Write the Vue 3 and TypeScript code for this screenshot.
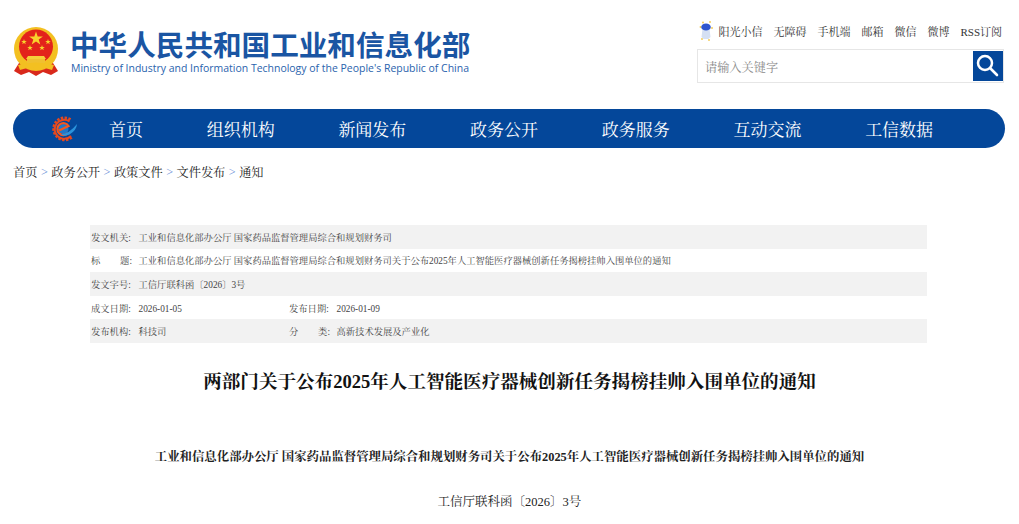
<script setup lang="ts">
const topLinks = ['无障碍', '手机端', '邮箱', '微信', '微博', 'RSS订阅'];
const navItems = ['首页', '组织机构', '新闻发布', '政务公开', '政务服务', '互动交流', '工信数据'];
const crumbs = ['首页', '政务公开', '政策文件', '文件发布', '通知'];

const docTitle = '工业和信息化部办公厅 国家药品监督管理局综合和规划财务司关于公布2025年人工智能医疗器械创新任务揭榜挂帅入围单位的通知';

// a space in a label means its two halves sit at both ends of the label box
const metaRows = [
  [{ label: '发文机关:', value: '工业和信息化部办公厅 国家药品监督管理局综合和规划财务司' }],
  [{ label: '标 题:', value: docTitle }],
  [{ label: '发文字号:', value: '工信厅联科函〔2026〕3号' }],
  [
    { label: '成文日期:', value: '2026-01-05' },
    { label: '发布日期:', value: '2026-01-09' },
  ],
  [
    { label: '发布机构:', value: '科技司' },
    { label: '分 类:', value: '高新技术发展及产业化' },
  ],
];
</script>

<template>
  <div class="page">
    <header class="header">
      <div class="brand">
        <svg class="emblem" viewBox="0 0 46 50" aria-hidden="true">
          <path d="M6 36 L1 44 L8 48 L16 45 L23 49 L30 45 L38 48 L45 44 L40 36 Z" fill="#d9291c" />
          <circle cx="23" cy="22" r="22" fill="#f3c021" />
          <circle cx="23" cy="19.5" r="17" fill="#e3231b" />
          <path d="M23 4.5l1.7 5h5.2l-4.2 3.1 1.6 5-4.3-3.1-4.3 3.1 1.6-5-4.2-3.1h5.2z" fill="#f8d22c" />
          <path d="M11 12l.7 2h2.1l-1.7 1.2.7 2-1.8-1.2-1.8 1.2.7-2-1.7-1.2h2.1z" fill="#f8d22c" />
          <path d="M35 12l.7 2h2.1l-1.7 1.2.7 2-1.8-1.2-1.8 1.2.7-2-1.7-1.2h2.1z" fill="#f8d22c" />
          <path d="M17 18l.7 2h2.1l-1.7 1.2.7 2-1.8-1.2-1.8 1.2.7-2-1.7-1.2h2.1z" fill="#f8d22c" />
          <path d="M29 18l.7 2h2.1l-1.7 1.2.7 2-1.8-1.2-1.8 1.2.7-2-1.7-1.2h2.1z" fill="#f8d22c" />
          <path d="M15 29h16l2 3H13z" fill="#f5cf3a" />
          <rect x="14" y="32" width="18" height="5" fill="#f0c030" />
          <path d="M5 38 Q23 33 41 38 L39 43 Q23 37 7 43 Z" fill="#f3c021" />
          <rect x="21" y="38" width="4" height="4" fill="#f3c021" />
        </svg>
        <div class="brand-text">
          <div class="brand-cn">中华人民共和国工业和信息化部</div>
          <div class="brand-en">Ministry of Industry and Information Technology of the People's Republic of China</div>
        </div>
      </div>

      <div class="tools">
        <div class="top-links">
          <a class="sunshine">
            <svg class="sunshine-icon" viewBox="0 0 14 20" aria-hidden="true">
              <circle cx="1.5" cy="6" r="0.9" fill="#f2c84b" />
              <circle cx="4" cy="1.5" r="0.9" fill="#f2c84b" />
              <circle cx="11" cy="1" r="0.9" fill="#f2c84b" />
              <circle cx="13" cy="7" r="0.9" fill="#f2c84b" />
              <circle cx="3" cy="18" r="0.9" fill="#f2c84b" />
              <circle cx="10" cy="19" r="0.9" fill="#f2c84b" />
              <path d="M3.5 8h7l1 8-2 2h-5l-2-2z" fill="#d5e0f3" />
              <ellipse cx="7" cy="6" rx="4.8" ry="3.6" fill="#2f56cf" />
            </svg>
            阳光小信
          </a>
          <a v-for="link in topLinks" :key="link">{{ link }}</a>
        </div>
        <div class="search">
          <input class="search-input" placeholder="请输入关键字" />
          <button class="search-btn" aria-label="搜索">
            <svg viewBox="0 0 24 24" width="24" height="24" aria-hidden="true">
              <circle cx="9" cy="9" r="7" fill="none" stroke="#fff" stroke-width="2.5" />
              <path d="M14.5 14.5l6.5 6.5" stroke="#fff" stroke-width="2.6" stroke-linecap="round" />
            </svg>
          </button>
        </div>
      </div>
    </header>

    <nav class="nav">
      <svg class="nav-logo" viewBox="0 0 26 26" aria-hidden="true">
        <path d="M19.5 3.5A11 11 0 1 0 21 21" fill="none" stroke="#e2491f" stroke-width="2.8" stroke-dasharray="2.4 1.4" />
        <path d="M18.5 5.5A9.500 9.500 0 1 0 20 20" fill="none" stroke="#e8481d" stroke-width="2" />
        <circle cx="12.500" cy="13" r="5" fill="#1f78c8" />
        <path d="M17 17A6 6 0 1 1 17.500 10L8 14.500" fill="none" stroke="#f4571f" stroke-width="2.200" />
        <path d="M10 18Q18 18 26 8Q25.500 14.500 18.500 18.500Q13 21 10 18Z" fill="#2a93dc" />
      </svg>
      <a v-for="item in navItems" :key="item" class="nav-item">{{ item }}</a>
    </nav>

    <div class="crumbs">
      <template v-for="(crumb, i) in crumbs" :key="crumb">
        <a>{{ crumb }}</a>
        <span v-if="i < crumbs.length - 1" class="sep">&gt;</span>
      </template>
    </div>

    <main class="article">
      <div class="meta">
        <div v-for="(row, i) in metaRows" :key="i" class="meta-row">
          <div v-for="cell in row" :key="cell.label" class="meta-cell">
            <span class="meta-label">
              <span v-for="part in cell.label.split(' ')" :key="part">{{ part }}</span>
            </span>
            <span class="meta-value">{{ cell.value }}</span>
          </div>
        </div>
      </div>

      <h1 class="title">两部门关于公布<b>2025</b>年人工智能医疗器械创新任务揭榜挂帅入围单位的通知</h1>
      <p class="subhead">{{ docTitle }}</p>
      <p class="docno">工信厅联科函〔2026〕3号</p>
    </main>
  </div>
</template>

<style>
html,
body {
  margin: 0;
  overflow: hidden;
  background: #fff;
}
</style>

<style scoped>
.page {
  width: 1019px;
  height: 524px;
  overflow: hidden;
  font-family: "Liberation Serif", "Noto Serif CJK SC", "Noto Sans CJK SC", serif;
  color: #333;
}

.header {
  display: flex;
  justify-content: space-between;
  height: 109px;
  padding: 0 15px 0 13px;
  box-sizing: border-box;
}

.brand {
  display: flex;
  gap: 11px;
  padding-top: 27px;
}

.emblem {
  width: 46px;
  height: 50px;
}

.brand-text {
  padding-top: 1px;
}

.brand-cn {
  font-family: "Noto Sans CJK SC", sans-serif;
  font-size: 28.6px;
  line-height: 32px;
  font-weight: 700;
  color: #1a55a3;
  white-space: nowrap;
}

.brand-en {
  margin-left: 1px;
  font-family: "Open Sans", sans-serif;
  font-size: 10.47px;
  line-height: 16px;
  color: #2a63ad;
  white-space: nowrap;
}

.tools {
  flex-shrink: 0;
  width: 307px;
  padding-top: 20px;
}

.top-links {
  display: flex;
  justify-content: flex-end;
  align-items: center;
  gap: 11px;
  height: 22px;
  padding-right: 2px;
  font-size: 11px;
  color: #333;
  white-space: nowrap;
}

.sunshine {
  display: flex;
  align-items: center;
  gap: 5px;
}

.sunshine-icon {
  width: 14px;
  height: 20px;
}

.search {
  display: flex;
  justify-content: space-between;
  align-items: center;
  height: 34px;
  margin-top: 7px;
  padding: 1px 0 1px 1px;
  border: 1px solid #e6e6e6;
  box-sizing: border-box;
}

.search-input {
  flex: 1;
  min-width: 0;
  height: 100%;
  padding: 5px 0 0 6px;
  border: 0;
  outline: 0;
  background: transparent;
  font-family: inherit;
  font-size: 12.2px;
  box-sizing: border-box;
}

.search-input::placeholder {
  color: #8a8a8a;
}

.search-btn {
  display: flex;
  justify-content: center;
  align-items: center;
  width: 30px;
  height: 30px;
  padding: 0;
  border: 0;
  background: #04479a;
}

.nav {
  display: flex;
  align-items: center;
  gap: 63.7px;
  height: 39px;
  margin: 0 14px 0 13px;
  padding-left: 38px;
  border-radius: 20px;
  background: #04479a;
}

.nav-logo {
  width: 26px;
  height: 26px;
  margin-right: -31.7px;
}

.nav-item {
  font-size: 17px;
  color: #fff;
  white-space: nowrap;
}

.crumbs {
  display: flex;
  align-items: center;
  height: 24px;
  margin-top: 12px;
  padding-left: 13px;
  font-size: 12.2px;
  color: #222;
}

.sep {
  width: 13.9px;
  text-align: center;
  color: #5f8ad6;
}

.article {
  margin: 41px 92px 0 90px;
}

.meta-row {
  display: flex;
  align-items: center;
  height: 23.6px;
  padding-left: 1px;
  font-size: 9.3px;
  color: #444;
}

.meta-row:nth-child(odd) {
  background: #f2f2f2;
}

.meta-cell {
  display: flex;
  align-items: baseline;
  width: 198px;
  flex-shrink: 0;
  white-space: nowrap;
}

.meta-label {
  display: flex;
  justify-content: space-between;
  flex-shrink: 0;
  width: 41px;
  margin-right: 6.5px;
}

.title {
  margin: 27px 0 0;
  padding-left: 2px;
  font-size: 18.57px;
  line-height: 24px;
  font-weight: 700;
  text-align: center;
  color: #111;
}

.subhead {
  margin: 53px 0 0;
  padding-left: 2px;
  font-size: 12.4px;
  line-height: 20px;
  font-weight: 700;
  text-align: center;
  color: #222;
  white-space: nowrap;
}

.docno {
  margin: 25px 0 0;
  padding-left: 2px;
  font-size: 12.5px;
  line-height: 20px;
  text-align: center;
  color: #222;
}
</style>
